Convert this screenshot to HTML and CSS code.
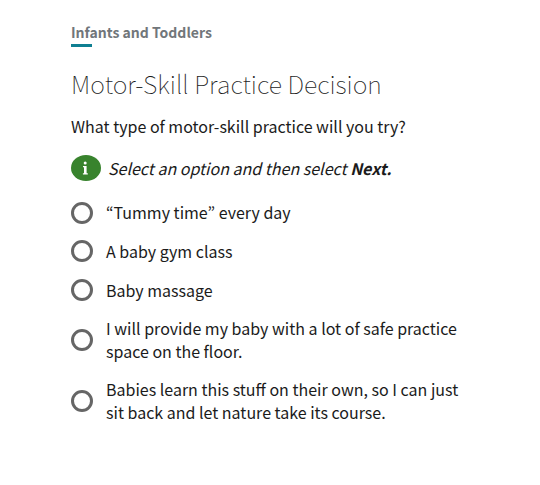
FILE: index.html
```html
<!DOCTYPE html>
<html lang="en">
<head>
    <meta charset="UTF-8">
    <meta name="viewport" content="width=device-width, initial-scale=1.0">
    <title>Motor-Skill Practice Decision</title>
    <link rel="stylesheet" href="styles.css">
</head>
<body>
    <main class="container">
        <p class="topic">Infants and Toddlers</p>
        <h1>Motor-Skill Practice Decision</h1>
        <form>
            <p class="question" id="question">What type of motor-skill practice will you try?</p>
            <p class="hint">
                <svg class="info-icon" width="30" height="26" viewBox="0 0 30 26" aria-hidden="true">
                    <ellipse cx="15" cy="13" rx="15" ry="13" fill="#38832d"/>
                    <circle cx="14.2" cy="8" r="1.5" fill="#fff"/>
                    <path d="M12 11h3.6v7.3h1.2v1.2h-4.9v-1.2H13v-6.1h-1z" fill="#fff"/>
                </svg>
                <span>Select an option and then select <strong>Next.</strong></span>
            </p>
            <div class="options" role="radiogroup" aria-labelledby="question">
                <div class="option">
                    <input type="radio" id="tummy" name="practice" value="tummy">
                    <label for="tummy">“Tummy time” every day</label>
                </div>
                <div class="option">
                    <input type="radio" id="gym" name="practice" value="gym">
                    <label for="gym">A baby gym class</label>
                </div>
                <div class="option">
                    <input type="radio" id="massage" name="practice" value="massage">
                    <label for="massage">Baby massage</label>
                </div>
                <div class="option">
                    <input type="radio" id="floor" name="practice" value="floor">
                    <label for="floor">I will provide my baby with a lot of safe practice space on the floor.</label>
                </div>
                <div class="option">
                    <input type="radio" id="nature" name="practice" value="nature">
                    <label for="nature">Babies learn this stuff on their own, so I can just sit back and let nature take its course.</label>
                </div>
            </div>
        </form>
    </main>
</body>
</html>
```
FILE: styles.css
```css
body {
    margin: 0;
    background-color: #fff;
    color: #1b1b1b;
    font-family: "Noto Sans CJK KR", "Open Sans", sans-serif;
    font-size: 16px;
    line-height: 23px;
}
.container {
    padding: 20px 66px 60px 71px;
}
p {
    margin: 0;
}
.topic {
    color: #71767a;
    font-size: 14px;
    font-weight: bold;
    line-height: 24px;
}
.topic::after {
    content: "";
    display: block;
    width: 21px;
    height: 3px;
    background-color: #0f7f92;
}
h1 {
    margin: 18px 0 14px;
    font-size: 25px;
    font-weight: 100;
    line-height: 36px;
}
.hint {
    display: flex;
    align-items: center;
    gap: 7px;
    margin: 17px 0 20px;
    font-style: italic;
}
.info-icon {
    flex: none;
}
.options {
    display: flex;
    flex-direction: column;
    gap: 15px;
}
.option {
    display: flex;
    align-items: center;
    gap: 13px;
    min-height: 23px;
}
.option + .option {
    min-height: 24px;
}
.option input {
    appearance: none;
    flex: none;
    width: 22px;
    height: 22px;
    margin: 0;
    border: 3px solid #666;
    border-radius: 50%;
    background-color: #fff;
}
.option input:checked {
    background-color: #0f7f92;
    box-shadow: inset 0 0 0 3px #fff;
}
```
